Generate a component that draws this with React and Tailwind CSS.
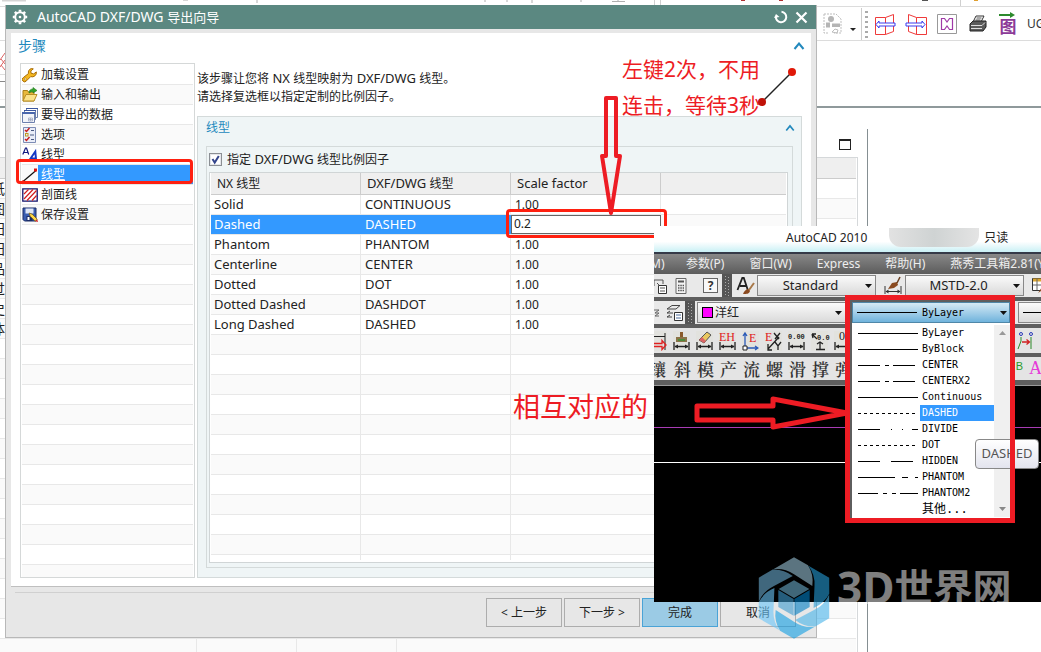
import React from "react";

const Svg = ({ w = 16, h = 16, children, className = "", box }) => (
  <svg width={w} height={h} viewBox={box || `0 0 ${w} ${h}`} fill="none" className={`block shrink-0 ${className}`} aria-hidden="true">
    {children}
  </svg>
);

const Latin = ({ children }) => <span className="text-[13px]">{children}</span>;

/* ---------- step list icons ---------- */
const WrenchIcon = () => (
  <Svg>
    <path d="M9.5 1.5a4 4 0 0 0-3 5L1.3 10.6a2.3 2.3 0 1 0 3.2 3.2L8.7 9.6a4.2 4.2 0 0 0 5.6-4.7l-2.6 2-2.6-.6-.3-2.4 2.5-2z" fill="#f5b81e" stroke="#a86d08" />
    <circle cx="3.3" cy="12" r="1" fill="#fff" stroke="#a86d08" strokeWidth=".6" />
  </Svg>
);
const FolderIcon = () => (
  <Svg>
    <path d="M1 3.5h4.5l1 1.5H12v9H1z" fill="#e8b93c" stroke="#a8801a" />
    <path d="M1 14 4 7.5h11L12 14z" fill="#fbe28a" stroke="#b98f24" />
    <path d="M7 6c0-3 2-4 4-4V.5L15 3.5 11 6V4.5C9.500 4.500 8.500 5 7 6z" fill="#34a12c" stroke="#1c7a18" strokeWidth=".6" />
  </Svg>
);
const LayersIcon = () => (
  <Svg>
    <path d="M4.500 1.500h11v9h-11z" fill="#fff" stroke="#6d80ad" />
    <path d="M4 1.500h12" stroke="#3a56a0" />
    <path d="M2.500 3.500h11v9h-11z" fill="#fff" stroke="#6d80ad" />
    <path d="M2 3.500h12" stroke="#3a56a0" />
    <path d="M.5 5.500h12v10H.5z" fill="#f3f5fa" stroke="#6d80ad" />
    <path d="M0 6h13" stroke="#4a67ad" strokeWidth="2" />
    <path d="M6.500 11h4v3h-4zM8.500 11v3M6.500 12.500h4" stroke="#9aa3bd" strokeWidth=".7" />
  </Svg>
);
const OptionsIcon = () => (
  <Svg>
    <path d="M1.500.5h12v15h-12z" fill="#e9edf8" stroke="#7d8cb5" />
    <path d="m3 3 1.500 1.500L7.500 1M3 12l1.500 1.500 3-3.500" stroke="#c81e1e" strokeWidth="1.500" />
    <rect x="3.500" y="6.500" width="2.500" height="2.500" stroke="#c09a20" />
    <path d="M9 3.500h3M8 8h4M9 12.500h3" stroke="#4a5a80" />
  </Svg>
);
const FontIcon = () => (
  <Svg>
    <path d="m.8 7.500 2.700-6.500h1l2.200 6.500M1.800 5.500h4" stroke="#111a80" strokeWidth="1.200" />
    <path d="m6.500 14.500 6.800-10 .9 10M8.500 11.500h5" stroke="#1237c4" strokeWidth="2" />
    <path d="M6 14.500h3M12 14.500h3.500" stroke="#1237c4" />
  </Svg>
);
const LineIcon = () => (
  <Svg>
    <path d="M1 14.500 14 3.500" stroke="#111" strokeWidth="1.200" />
    <rect x="12" y="1.500" width="3" height="3" fill="#e01010" />
    <rect x="0" y="13.500" width="2.500" height="2.500" fill="#e01010" />
  </Svg>
);
const HatchIcon = () => (
  <Svg>
    <path d="M.8 1.800h14.400v12.400H.8z" fill="#fff" stroke="#12126b" strokeWidth="1.300" />
    <path d="M2 7 6.500 2.500M2 12l9-9.500M5 13.500l9.500-10M10 13.500l4.500-5" stroke="#d21d1d" strokeWidth="1.200" />
  </Svg>
);
const SaveIcon = () => (
  <Svg>
    <path d="M1 1h13v13H2.500L1 12.500z" fill="#3a5db0" stroke="#1b2c66" />
    <path d="M3.500 1.500h8v5h-8z" fill="#dfe6f5" />
    <path d="M4.500 9h6v5h-6z" fill="#1b2c66" />
    <path d="M5.500 10h2v3h-2z" fill="#fff" />
    <path d="m7 6 1.200 3.200 5 5 2-2-5-5z" fill="#ffd94a" stroke="#7a5a08" strokeWidth=".7" />
    <path d="m13.200 14.200 2-2 .8 2.800z" fill="#d42020" />
  </Svg>
);

const steps = [
  ["加载设置", WrenchIcon],
  ["输入和输出", FolderIcon],
  ["要导出的数据", LayersIcon],
  ["选项", OptionsIcon],
  ["线型", FontIcon],
  ["线型", LineIcon, true],
  ["剖面线", HatchIcon],
  ["保存设置", SaveIcon],
];

const mapping = [
  ["Solid", "CONTINUOUS", "1.00"],
  ["Dashed", "DASHED", "0.2", true],
  ["Phantom", "PHANTOM", "1.00"],
  ["Centerline", "CENTER", "1.00"],
  ["Dotted", "DOT", "1.00"],
  ["Dotted Dashed", "DASHDOT", "1.00"],
  ["Long Dashed", "DASHED", "1.00"],
];

const linetypes = [
  ["ByLayer", "60 0"],
  ["ByBlock", "60 0"],
  ["CENTER", "22 5 4 4 22 9"],
  ["CENTERX2", "22 5 4 4 22 9"],
  ["Continuous", "60 0"],
  ["DASHED", "3 3", true],
  ["DIVIDE", "22 11 1 10 1 9 6 0"],
  ["DOT", "3 3"],
  ["HIDDEN", "22 11 22 11"],
  ["PHANTOM", "37 7 6 7 3 0"],
  ["PHANTOM2", "20 5 4 5 4 4 18 0"],
  ["其他...", null],
];

const blank = (n) => Array.from({ length: n }, (_, i) => i);

const Caret = ({ w = 12 }) => (
  <Svg w={w} h={8} box="0 0 12 8">
    <path d="M1.500 7 6 1.500 10.500 7" stroke="#2389bd" strokeWidth="2" />
  </Svg>
);

/* ---------- host application behind the dialog ---------- */
function HostApp() {
  const fragments = ["", "纸", "图", "田", "田", "品", "过", "史", "体"];
  return (
    <div className="flex min-h-screen flex-col bg-white">
      <div className="h-[7px] overflow-hidden border-b border-[#dcdcdc]">
        <Svg w={1041} h={6}>
          <path d="M2 0h24v1.500H2z" fill="#d5d5d5" />
          <path d="M183 0h5M257 0v3M485 0v2M507 0v2M532 0v3M581 0v2M612 1.500h13M618 0v1" stroke="#b0b0b0" />
          <path d="M654.500 0v6M660.500 0v6M960.500 0v6" stroke="#d0d0d0" />
          <path d="M741 0h4M779 0h4" stroke="#b03030" strokeWidth="2" />
          <path d="M922 0h6" stroke="#555" strokeWidth="2" />
          <path d="M974 0h4" stroke="#e0a030" strokeWidth="2" />
        </Svg>
      </div>
      <div className="flex h-[34px] items-center overflow-hidden border-b border-[#dcdcdc] pl-[823px]">
        <Svg w={20} h={24}>
          <path d="M1 2h12l5 5v14h-7M1 2v19h5" stroke="#bdbdbd" strokeDasharray="2 1" />
          <circle cx="8" cy="7" r="3" fill="#b5b5b5" />
          <path d="M3 10.500h4v5H3zM9 11.500h8v3.500H9z" fill="#b5b5b5" />
          <path d="m9 20 3-3 3 1-1 3z" stroke="#bdbdbd" />
        </Svg>
        <Svg w={6} h={4} className="mt-3 ml-[7px]"><path d="M0 0h6L3 3z" fill="#222" /></Svg>
        <Svg w={8} h={32} className="ml-[5px]">
          <path d="M.5 0v32" stroke="#ccc" />
          <path d="M5.500 3v28" stroke="#aaa" strokeWidth="3" strokeDasharray="2 3" />
        </Svg>
        <Svg w={22} h={24} className="ml-[5px]">
          <path d="M1.500 5.500h10v17h-10zM11.500 5.500l8-3v17l-8 3" stroke="#ef3b3b" />
          <path d="M2 12.500 5 9v2h16v3H5v2z" fill="#fff" stroke="#3a3af0" />
        </Svg>
        <Svg w={22} h={24} className="ml-[9px]">
          <path d="M11.500 5.500h10v17h-10zM11.500 5.500l-8-3v17l8 3" stroke="#ef3b3b" />
          <path d="M20 12.500 17 9v2H1v3h16v2z" fill="#fff" stroke="#3a3af0" />
        </Svg>
        <Svg w={20} h={22} className="ml-[10px]">
          <path d="M.5 1.500h19v19H.5z" stroke="#999" />
          <path d="M4.500 5.500h3L10 9l2.500-3.500h3v11h-3L10 13l-2.500 3.500h-3z" stroke="#a03aa8" strokeWidth="1.200" />
        </Svg>
        <Svg w={18} h={18} className="ml-3">
          <path d="M4 7 7 1h8l-3 6z" fill="#fff" stroke="#333" />
          <path d="M7.500 3h5M6.500 5h5" stroke="#555" />
          <path d="m1 9 3-3h13v6l-3 4H1z" fill="#5b5b5b" stroke="#222" />
          <path d="M2 10.500h11l3-3M2 13.500h11" stroke="#ddd" />
        </Svg>
        <span className="ml-3 flex flex-col items-center">
          <Svg w={18} h={6}><path d="M0 3h13" stroke="#2d8a2d" strokeWidth="2" /><path d="M11 0l5 3-5 3z" fill="#2d8a2d" /></Svg>
          <span className="text-[17px] leading-[17px] font-bold text-[#8c3a98]">图</span>
        </span>
        <span className="ml-[10px] text-[12px] whitespace-nowrap text-[#333]">UG</span>
      </div>
      <div className="h-[67px] border-b-2 border-[#8f999b] pt-[9px]">
        <Svg w={5} h={50}>
          <path d="M5 3 0 10M5 10 0 17M1 9l4 5M1 15l4 5" stroke="#d66" />
          <path d="M0 24.500h5M0 50h5" stroke="#ddd" />
          <path d="M0 31.500h5" stroke="#888" />
        </Svg>
      </div>
      <div className="mt-[21px] flex grow">
        <div className="w-[868px] border-r border-[#858f92]">
          <div className="flex h-7 justify-end pt-[10px] pr-4">
            <span className="h-[11px] w-3 border border-t-2 border-[#222]" />
          </div>
          <div className="mr-[9px] h-[495px] overflow-hidden border-t border-r border-[#d5d8da]">
            <div className="mr-px h-[21px] border-b border-[#ccc] bg-[#efefef]" />
            {blank(24).map((i) => (
              <div key={i} className={`mr-px flex h-5 border-b border-[#e8e8e8] ${i % 2 ? "bg-[#fafafa]" : "bg-white"}`}>
                <span className="flex w-[5px] justify-end overflow-hidden text-[14px] leading-5 text-[#222]">{fragments[i + 1] || ""}</span>
                <span className="w-[192px] border-r border-[#e8e8e8]" />
                <span className="w-[100px] border-r border-[#e8e8e8]" />
                <span className="w-[100px] border-r border-[#e8e8e8]" />
              </div>
            ))}
          </div>
        </div>
      </div>
    </div>
  );
}

/* ---------- export wizard ---------- */
function StepList() {
  return (
    <ul className="w-[175px] shrink-0 overflow-hidden border border-[#d5d8d8] p-px">
      {steps.map(([name, Icon, active], i) => (
        <li key={i} className={`h-5 border-b border-[#e8e8e8] ${i % 2 ? "bg-[#fafafa]" : "bg-white"}`}>
          <button className="flex h-[19px] w-full items-center text-left">
            <Icon />
            <span className={`flex h-[19px] grow items-center pl-[3px] ${active ? "bg-[#3399ff] text-white underline" : ""}`}>{name}</span>
          </button>
        </li>
      ))}
      {blank(18).map((i) => (
        <li key={i} className={`h-5 border-b border-[#e8e8e8] ${i % 2 ? "bg-[#fafafa]" : "bg-white"}`} />
      ))}
    </ul>
  );
}

function MappingTable() {
  const th = "h-[22px] border-b border-[#ccc] bg-[#efefef] py-0 pl-[6px] text-left font-normal leading-[21px]";
  const td = "h-5 border-b border-[#e8e8e8] py-0 leading-[19px]";
  return (
    <div className="mr-1 mb-1 ml-[2px] grow basis-0 overflow-hidden border border-[#d0d5d6] bg-white px-px pb-[2px]">
      <div className="h-full overflow-hidden">
        <table className="w-full table-fixed border-separate border-spacing-0">
          <colgroup>
            <col className="w-[150px]" />
            <col className="w-[150px]" />
            <col className="w-[150px]" />
            <col />
          </colgroup>
          <thead>
            <tr>
              <th className={`${th} border-r`}>NX 线型</th>
              <th className={`${th} border-r`}><Latin>DXF/DWG </Latin>线型</th>
              <th className={`${th} border-r`}><Latin>Scale factor</Latin></th>
              <th className={th} aria-label="" />
            </tr>
          </thead>
          <tbody className="text-[13px]">
            {mapping.map(([nx, dwg, scale, active], i) => (
              <tr key={nx} className={i % 2 ? "bg-[#fafafa]" : "bg-white"}>
                <td className={`${td} pl-[3px] ${active ? "bg-[#3399ff] text-white" : "border-r"}`}>{nx}</td>
                <td className={`${td} pl-1 ${active ? "bg-[#3399ff] text-white" : "border-r"}`}>{dwg}</td>
                {active ? (
                  <td className={td}>
                    <input aria-label="Scale factor" defaultValue={scale} className="block h-[19px] w-full border border-[#666] bg-white pb-[2px] pl-[2px] text-[12px] text-[#222] outline-none" />
                  </td>
                ) : (
                  <td className={`${td} border-r pl-1 text-[12px]`}>{scale}</td>
                )}
                <td className={td} />
              </tr>
            ))}
            {blank(12).map((i) => (
              <tr key={i} className={i % 2 ? "bg-white" : "bg-[#fafafa]"}>
                <td className={`${td} border-r`} />
                <td className={`${td} border-r`} />
                <td className={`${td} border-r`} />
                <td className={td} />
              </tr>
            ))}
          </tbody>
        </table>
      </div>
    </div>
  );
}

function Wizard() {
  const btn = "h-[29px] w-[76px] border";
  return (
    <section className="absolute top-[5px] left-[5px] w-[78%] border-x border-b border-[#b8b8b8] bg-[#e7e7e7] text-[12px] text-[#222]">
      <header className="flex h-6 items-center bg-[#5b8881] pr-2 pl-1 text-white">
        <Svg w={20} h={20}>
          <circle cx="10" cy="10" r="4.800" stroke="#fff" strokeWidth="2" />
          <circle cx="10" cy="10" r="1.300" fill="#fff" />
          <path d="M10 2.800v2M10 15.200v2M2.800 10h2M15.200 10h2M4.900 4.900l1.400 1.400M13.700 13.700l1.400 1.400M15.100 4.900l-1.400 1.400M6.300 13.700l-1.400 1.400" stroke="#fff" strokeWidth="2.600" />
        </Svg>
        <h1 className="ml-[7px] grow text-[13px]"><span className="text-[14px]">AutoCAD DXF/DWG </span>导出向导</h1>
        <button aria-label="重置">
          <Svg w={14} h={14}>
            <path d="M7.500 1.800a5.200 5.200 0 1 1-5.600 4.700" stroke="#fff" strokeWidth="2" />
            <path d="M0 8l2-4 3.500 3z" fill="#fff" />
          </Svg>
        </button>
        <button aria-label="关闭" className="ml-[7px]">
          <Svg w={13} h={13}><path d="m1.500 1.500 10 10M11.500 1.500l-10 10" stroke="#fff" strokeWidth="2.200" /></Svg>
        </button>
      </header>
      <div className="mx-[5px] mt-1 border-b border-[#bfbfbf] bg-white px-[9px] pb-2">
        <div className="flex h-[30px] items-center justify-between pb-[5px]">
          <h2 className="-ml-[2px] text-[14px] text-[#2389bd]">步骤</h2>
          <button aria-label="折叠步骤" className="-mr-[3px]"><Caret /></button>
        </div>
        <div className="flex h-[515px] gap-[2px]">
          <StepList />
          <div className="flex min-w-0 grow flex-col">
            <p className="h-[53px] pt-[6px] leading-[18px]">该步骤让您将<Latin> NX </Latin>线型映射为<Latin> DXF/DWG </Latin>线型。<br />请选择复选框以指定定制的比例因子。</p>
            <div className="flex grow flex-col border border-[#d4dada] bg-[#eff5f6] px-2 pb-[9px]">
              <div className="flex h-[29px] items-center justify-between pb-2">
                <h3 className="text-[#2389bd]">线型</h3>
                <button aria-label="折叠线型" className="-mr-[2px]"><Caret w={10} /></button>
              </div>
              <div className="flex grow flex-col border border-[#d4dada]">
                <label className="flex h-[25px] shrink-0 items-center gap-[5px] pl-[2px]">
                  <span className="grid">
                    <input type="checkbox" defaultChecked className="peer col-start-1 row-start-1 size-[13px] appearance-none border border-[#8b8f94] bg-white shadow-[inset_0_0_0_1px_#e4e6ea]" />
                    <Svg w={13} h={13} className="pointer-events-none col-start-1 row-start-1 opacity-0 peer-checked:opacity-100">
                      <path d="m3.500 6 2.200 3.500L9.800 3" stroke="#33458c" strokeWidth="2" />
                    </Svg>
                  </span>
                  <span>指定<Latin> DXF/DWG </Latin>线型比例因子</span>
                </label>
                <MappingTable />
              </div>
            </div>
          </div>
        </div>
      </div>
      <footer className="mt-[5px] ml-[9px] flex justify-end gap-[2px] border-t border-[#d0d0d0] pt-[5px] pr-5 pb-[10px]">
        <button className={`${btn} border-[#adadad] bg-[#e7e7e7]`}>&lt; 上一步</button>
        <button className={`${btn} border-[#adadad] bg-[#e7e7e7]`}>下一步 &gt;</button>
        <button className={`${btn} border-[#4aa3d6] bg-[#9bcbe5]`}>完成</button>
        <button className={`${btn} border-[#adadad] bg-[#e7e7e7]`}>取消</button>
      </footer>
    </section>
  );
}

/* ---------- CAD window ---------- */
const Grip = () => (
  <Svg w={10} h={23} className="bg-[#555]">
    <path d="M3.500 2v19M6.500 3v19" stroke="#aaa" strokeDasharray="1 2" />
  </Svg>
);

const Combo = ({ label, options, className }) => (
  <span className={`relative flex h-[21px] shrink-0 items-center ${className}`}>
    <select aria-label={label} className="h-full w-full appearance-none border border-[#888] bg-linear-to-b from-[#fafafa] to-[#dadada] pr-3 text-center text-[13px] text-[#222]">
      {options.map((o) => <option key={o}>{o}</option>)}
    </select>
    <Svg w={7} h={4} className="pointer-events-none absolute right-[4px]"><path d="M0 0h7L3.500 4z" fill="#111" /></Svg>
  </span>
);

const Dim = ({ children }) => (
  <Svg w={17} h={20} className="overflow-visible bg-[#e2e2de]">
    <path d="M1 11v8M16 11v8M2 15.500h13" stroke="#222" strokeWidth="1.300" />
    <path d="m1.500 15.500 3.500-2v4zM15.500 15.500l-3.500-2v4z" fill="#222" />
    {children}
  </Svg>
);

const tiny = { fontFamily: "Liberation Serif", fontSize: 12 };
const tinyNum = { fontFamily: "Liberation Mono", fontSize: 7, fontWeight: 700 };

function DimToolbar() {
  return (
    <div className="flex h-[25px] items-center gap-[6px] bg-[#e4e4e4]">
      <Svg w={13} h={20} className="bg-[#e2e2de]">
        <path d="M0 5.500h11M11 2v17" stroke="#222" />
        <path d="M0 12.500h8v-3l4 4.500-4 4.500v-3H0" stroke="#e02020" strokeWidth="1.300" />
      </Svg>
      <Dim><path d="M7 1h3v5H7z" fill="#8a5a2a" /><path d="M3 6h11v5H3z" fill="#8b7348" /><path d="M5 9h7" stroke="#4d8a3a" strokeWidth="2" /></Dim>
      <Dim><path d="m3 9 8-8 4 3-7 8z" fill="#e8c860" stroke="#555" /><path d="m3 9 3-3 4 4-2 2z" fill="#d66" /></Dim>
      <Dim><text x="0" y="10" fill="#e02020" style={tiny}>EH</text></Dim>
      <Svg w={17} h={20} className="bg-[#e2e2de]">
        <path d="M3 17V2M3 17h13M1 5l2-3 2 3M13 15l3 2-3 2" stroke="#2a5ab8" strokeWidth="1.300" />
        <path d="M1 15h4v4H1z" fill="#fff" stroke="#222" />
        <text x="7" y="11" fill="#e02020" style={tiny}>E</text>
      </Svg>
      <Svg w={17} h={20} className="bg-[#e2e2de]">
        <text x="0" y="10" fill="#e02020" style={tiny}>E</text>
        <path d="m3 18 11-12M9 2l5 6M15 2l-5 6M10 11l3 4 3-4M13 15v4M3 13v6h4" stroke="#222" strokeWidth="1.300" />
      </Svg>
      <Dim><text x="0" y="8" fill="#222" style={tinyNum}>0.00</text></Dim>
      <Svg w={17} h={20} className="overflow-visible bg-[#e2e2de]">
        <path d="m1 3 5 5M1 3l4 0M1 3l1 4M9 11v8M5 18.500h9M6 13l3-2 3 2" stroke="#222" strokeWidth="1.300" />
        <text x="6" y="9" fill="#222" style={tinyNum}>0.0</text>
      </Svg>
      <Dim><text x="5" y="9" fill="#222" style={tiny}>0</text></Dim>
      <Svg w={20} h={20} className="mr-1 ml-auto">
        <circle cx="4" cy="3" r="1.500" stroke="#2a3ab8" /><circle cx="14" cy="3" r="1.500" stroke="#2a3ab8" />
        <path d="M4 6v4l-3 8M14 6v12" stroke="#2a8a2a" />
        <path d="M5 11h7M9.500 8.500l3 2.500-3 2.500" stroke="#d02020" strokeWidth="1.300" />
      </Svg>
    </div>
  );
}

function LinetypeDropdown() {
  return (
    <div className="absolute top-[69px] left-[191px] w-[170px] border-[5px] border-[#ed1c24] bg-[#5e5e5e] pt-[2px] pl-[2px] font-['DejaVu_Sans_Mono','Noto_Sans_CJK_SC',monospace] text-[10px] text-black">
      <button aria-haspopup="listbox" aria-expanded="true" className="flex h-[21px] w-full items-center border border-[#4f87a8] bg-linear-to-b from-[#d5eaf5] to-[#6fb3dc] pr-[2px] pl-[4px]">
        <Svg w={60} h={1}><path d="M0 .5h60" stroke="#000" /></Svg>
        <span className="ml-[5px] grow text-left">ByLayer</span>
        <Svg w={7} h={4}><path d="M0 0h7L3.500 4z" fill="#111" /></Svg>
      </button>
      <div className="flex bg-white pt-[2px] pb-[1px]">
        <ul role="listbox" className="grow">
          {linetypes.map(([name, dash, active]) => (
            <li key={name} role="option" aria-selected={!!active} className="flex h-4 items-center pl-[6px]">
              <span className="w-[62px]">
                {dash && <Svg w={60} h={1}><path d="M0 .5h60" stroke="#000" strokeDasharray={dash} /></Svg>}
              </span>
              <span className={`h-4 grow pl-[2px] leading-4 ${active ? "bg-[#3399ff] text-white" : ""} ${dash ? "" : "text-[12px]"}`}>{name}</span>
            </li>
          ))}
        </ul>
        <div className="flex w-4 flex-col items-center justify-between bg-[#f0f0f0] py-[6px]">
          <Svg w={7} h={4}><path d="M0 4h7L3.500 0z" fill="#999" /></Svg>
          <Svg w={7} h={4}><path d="M0 0h7L3.500 4z" fill="#888" /></Svg>
        </div>
      </div>
    </div>
  );
}

function CadWindow() {
  return (
    <section className="absolute top-[226px] right-0 left-[654px] h-[376px] bg-black">
      <div className="flex h-full flex-col overflow-hidden">
        <header className="flex h-[26px] shrink-0 items-center bg-linear-to-b from-white from-60% to-[#c9f0f5] pb-[3px] pl-[132px] text-[12px] whitespace-nowrap text-[#222]">
          AutoCAD 2010
          <span className="mr-[5px] ml-[22px] h-[19px] w-[90px] rounded-b-xl bg-linear-to-r from-[#e2e2e2] via-[#cfd3d3] to-[#e4e4e4]" />
          只读
        </header>
        <nav className="flex h-[22px] shrink-0 items-center gap-[25px] border-t-2 border-[#353a48] bg-linear-to-b from-[#888] to-[#5c5c5c] text-[12px] whitespace-nowrap text-[#eee]">
          <span className="-ml-1 w-[11px] shrink-0">M)</span>
          <a href="#params">参数(P)</a>
          <a href="#window">窗口(W)</a>
          <a href="#express">Express</a>
          <a href="#help">帮助(H)</a>
          <a href="#tools">燕秀工具箱2.81(Y)</a>
        </nav>
        <div className="flex shrink-0 flex-col gap-1 border-b border-[#999] bg-[#5e5e5e] pb-[5px]">
          <div className="flex h-[23px] items-center overflow-hidden bg-[#e9e9e9]">
            <Svg w={14} h={18}>
              <path d="M0 3h9v4M0 3v6M3 6l3 3" stroke="#555" />
              <path d="M4.500 8.500h8v8h-8z" fill="#fff" stroke="#333" /><path d="M6 11h5M6 14h5" stroke="#555" />
            </Svg>
            <Svg w={12} h={16} className="ml-[7px]">
              <path d="M1 .5h10v15H1z" fill="#f4f4f4" stroke="#666" />
              <path d="M3 3.500h6" stroke="#555" strokeWidth="2" />
              <path d="M3 7.500h6M3 10h6M3 12.500h6" stroke="#555" strokeWidth="1.500" strokeDasharray="1.500 .8" />
            </Svg>
            <span className="ml-[9px] h-[18px] w-px bg-[#888]" />
            <span className="ml-[7px] flex size-[15px] shrink-0 items-center justify-center border border-[#666] bg-[#f8f8f8] text-[12px] font-bold text-[#333]">?</span>
            <span className="ml-[4px]"><Grip /></span>
            <Svg w={20} h={20} className="ml-[4px]">
              <path d="m1.500 14 4.800-12h1.500l4 12M4 10h6.500" stroke="#222" strokeWidth="1.800" />
              <path d="M7 18c1-3 3-5 6-5l1 2c-1 3-3 3-7 3z" fill="#8a4a20" /><path d="m13 14 5-7" stroke="#a87848" strokeWidth="2" />
            </Svg>
            <Combo label="文字样式" options={["Standard"]} className="ml-px w-[119px]" />
            <span className="ml-[3px] h-[19px] w-px bg-[#888]" />
            <Svg w={18} h={20} className="ml-[5px]">
              <path d="M1 10v8M17 10v8M2 15.500h14" stroke="#333" /><path d="m1.500 15.500 3-2v4zM16.500 15.500l-3-2v4z" fill="#333" />
              <path d="m4 13 4-6 5-1 1 3-4 3z" fill="#8a4a20" /><path d="m13 7 3-6" stroke="#6b4020" strokeWidth="1.500" />
            </Svg>
            <Combo label="标注样式" options={["MSTD-2.0"]} className="ml-[3px] w-[119px]" />
            <span className="ml-[3px] h-[19px] w-px bg-[#888]" />
            <Svg w={14} h={18} className="ml-[5px]">
              <path d="M.5 1.500h14v12H.5z" fill="#fff" stroke="#333" /><path d="M1 3h13" stroke="#d9a430" strokeWidth="3" /><path d="M1 8h13M5 2v11" stroke="#666" />
              <path d="m6 16 4-6 2 2z" fill="#8a4a20" />
            </Svg>
          </div>
          <div className="flex h-[23px] items-center overflow-hidden bg-[#e9e9e9]">
            <Svg w={6} h={14}><path d="M0 4h5l-4 3h4l-4 3h4" stroke="#666" /></Svg>
            <Svg w={18} h={18} className="ml-[6px]">
              <path d="m1 5 5-3.500h8L10 5zM1 9l3-2M1 13l3-2M1 9h6M1 13h5" stroke="#444" />
              <path d="M8.500 8.500h8v8h-8z" fill="#fff" stroke="#333" /><path d="M10 11h5M10 14h5" stroke="#4a6a9a" />
            </Svg>
            <span className="ml-[1px]"><Grip /></span>
            <span className="relative ml-[2px] flex h-[21px] w-[150px] shrink-0 items-center">
              <select aria-label="颜色" className="h-full w-full appearance-none border border-[#888] bg-linear-to-b from-[#fafafa] to-[#dadada] pl-[17px] text-[12px] text-[#222]">
                <option>洋红</option>
              </select>
              <span className="pointer-events-none absolute left-[5px] size-[11px] border border-black bg-[#ff00ff]" />
              <Svg w={7} h={4} className="pointer-events-none absolute right-[5px]"><path d="M0 0h7L3.500 4z" fill="#111" /></Svg>
            </span>
            <span className="ml-auto flex h-[21px] w-[23px] items-center border border-r-0 border-[#888] bg-linear-to-b from-[#fafafa] to-[#dadada] pl-1">
              <span className="h-px w-full bg-black" />
            </span>
          </div>
          <DimToolbar />
          <div className="flex h-[23px] items-center overflow-hidden bg-[#e4e4e4] font-['Noto_Serif_CJK_SC','Noto_Sans_CJK_SC',serif] text-[17px] font-semibold whitespace-nowrap text-[#333]">
            <span className="flex w-3 justify-end overflow-hidden">镶</span>
            <span className="flex gap-[6px] pl-[8px]">
              {[..."斜模产流螺滑撑弹"].map((c) => <span key={c}>{c}</span>)}
            </span>
            <span className="ml-auto pb-1 font-['Liberation_Sans',sans-serif] text-[11px] font-normal text-[#2a9a2a]">B</span>
            <span className="ml-[6px] w-3 shrink-0 font-['Liberation_Serif',serif] text-[18px] font-normal text-[#e63ad8]">A</span>
          </div>
        </div>
        <div className="mt-[41px] h-px shrink-0 bg-[#a83cb4]" />
        <div className="mt-[34px] h-px shrink-0 bg-white" />
      </div>
      <div role="tooltip" className="absolute top-[213px] left-[321px] z-10 flex h-[30px] w-[64px] items-center justify-center rounded-sm border border-[#888] bg-linear-to-b from-white to-[#e3e4ee] text-[13px] text-[#555]">DASHED</div>
      <div className="pointer-events-none absolute top-[200px] left-[356px] z-20 h-14 w-[5px] bg-[#ed1c24]" />
      <LinetypeDropdown />
      <Svg w={162} h={42} className="absolute top-[167px] left-[38px]">
        <path d="M5 13h76V6l74 14-74 14v-7H5z" stroke="#ed1c24" strokeWidth="5" strokeLinejoin="round" />
      </Svg>
    </section>
  );
}

/* ---------- watermark ---------- */
function Watermark() {
  const blades = ["#98c1d5", "#259bd5", "#47b4ea", "#119ee3", "#69c5f8", "#6cacd0"];
  return (
    <div className="pointer-events-none absolute top-[557px] left-[758px] flex items-start">
      <Svg w={72} h={82} box="0 0 216 246" className="opacity-60">
        <g transform="translate(108 123)">
          {blades.map((c, i) => (
            <path key={i} transform={`rotate(${i * 60})`} d="M-62-86 0-122 42-98Q60-70 55-36L0-71Q-28-90-62-86z" fill={c} />
          ))}
          <path d="M0-53 46-27 0 0-46-27z" fill="#6cacca" />
          <path d="M-47-24-1 3v50l-46-26z" fill="#3f9bcf" />
          <path d="M47-24 1 3v50l46-26z" fill="#007fc5" />
        </g>
      </Svg>
      <span className="mt-[6px] ml-[7px] flex items-start text-[39px] leading-[48px] font-bold whitespace-nowrap text-white/50">
        <span className="text-[44px]">3D</span>
        <span>世界网</span>
      </span>
    </div>
  );
}

export default function App() {
  return (
    <main className="relative min-h-screen overflow-hidden bg-white font-['Noto_Sans','Noto_Sans_CJK_SC',sans-serif]">
      <HostApp />
      <Wizard />
      <div className="pointer-events-none absolute top-[159px] left-4 h-[25px] w-[177px] rounded-sm border-[3px] border-[#ff2010]" />
      <div className="pointer-events-none absolute top-[209px] left-[506px] h-[29px] w-[161px] rounded-sm border-[3px] border-[#ff2010]" />
      <p className="pointer-events-none absolute top-[51px] left-[622px] text-[21px] leading-[36px] whitespace-nowrap text-[#ed1c24]">左键2次，不用<br />连击，等待3秒</p>
      <Svg w={40} h={40} className="pointer-events-none absolute top-[67px] left-[757px]">
        <path d="M5 35 35 5" stroke="#222" strokeWidth="1.500" />
        <circle cx="35" cy="5" r="4" fill="#e01808" /><circle cx="5" cy="35" r="4" fill="#c01208" />
      </Svg>
      <Svg w={28} h={124} className="pointer-events-none absolute top-[94px] left-[597px]">
        <path d="M9 4h10v58h4l-9 57L5 62h4z" stroke="#ed1c24" strokeWidth="4" strokeLinejoin="round" />
      </Svg>
      <p className="pointer-events-none absolute top-[387px] left-[513px] text-[27px] leading-[40px] whitespace-nowrap text-[#ed1c24]">相互对应的</p>
      <CadWindow />
      <Watermark />
    </main>
  );
}
